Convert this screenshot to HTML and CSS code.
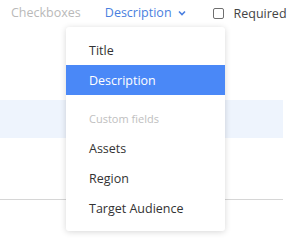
FILE: index.html
```html
<!DOCTYPE html>
<html>
<head>
<meta charset="utf-8">
<link rel="stylesheet" href="styles.css">
</head>
<body>
<div class="page">
  <div class="toolbar">
    <span class="tab tab-muted">Checkboxes</span>
    <span class="tab tab-active">Description
      <svg class="chev" width="8" height="6" viewBox="0 0 8 6"><path d="M1 1.5 L4 4.5 L7 1.5" fill="none" stroke="#4a7fe0" stroke-width="1.6"/></svg>
    </span>
    <label class="check"><span class="box"></span>Required</label>
  </div>
  <div class="row-highlight"></div>
  <div class="divider"></div>

  <div class="menu">
    <div class="item">Title</div>
    <div class="item selected">Description</div>
    <div class="group">Custom fields</div>
    <div class="item">Assets</div>
    <div class="item">Region</div>
    <div class="item">Target Audience</div>
  </div>
</div>
</body>
</html>
```
FILE: styles.css
```css
html, body {
  margin: 0;
  padding: 0;
  background: #fff;
}
body {
  font-family: "Open Sans", "Noto Sans", sans-serif;
  font-size: 12.5px;
  color: #333;
}
.page {
  position: relative;
  width: 300px;
  height: 240px;
  overflow: hidden;
}
.toolbar {
  display: flex;
  align-items: center;
  height: 26px;
  padding-left: 11px;
}
.tab {
  display: flex;
  align-items: center;
  line-height: 16px;
}
.tab-muted {
  color: #b9b9b9;
}
.tab-active {
  color: #4a7fe0;
  margin-left: 24px;
}
.chev {
  margin-left: 6px;
}
.check {
  display: flex;
  align-items: center;
  margin-left: 27px;
  color: #444;
}
.box {
  width: 9px;
  height: 9px;
  border: 1px solid #6f6f6f;
  border-radius: 2px;
  margin-right: 10px;
}
.row-highlight {
  margin-top: 74px;
  width: 283px;
  height: 38px;
  background: #eef4fd;
}
.divider {
  margin-top: 61px;
  width: 283px;
  height: 1px;
  background: #d6d6d6;
}
.menu {
  position: absolute;
  left: 66px;
  top: 27px;
  width: 159px;
  box-sizing: border-box;
  padding: 8px 0;
  background: #fff;
  border-radius: 3px;
  box-shadow: 0 1px 6px rgba(0, 0, 0, 0.16);
}
.item {
  height: 30px;
  line-height: 31px;
  padding-left: 23px;
  color: #333;
}
.item.selected {
  background: #4a88f7;
  color: #fff;
}
.group {
  height: 38px;
  box-sizing: border-box;
  padding: 16px 0 0 23px;
  line-height: 16px;
  font-size: 11px;
  color: #c0c0c0;
}
```
